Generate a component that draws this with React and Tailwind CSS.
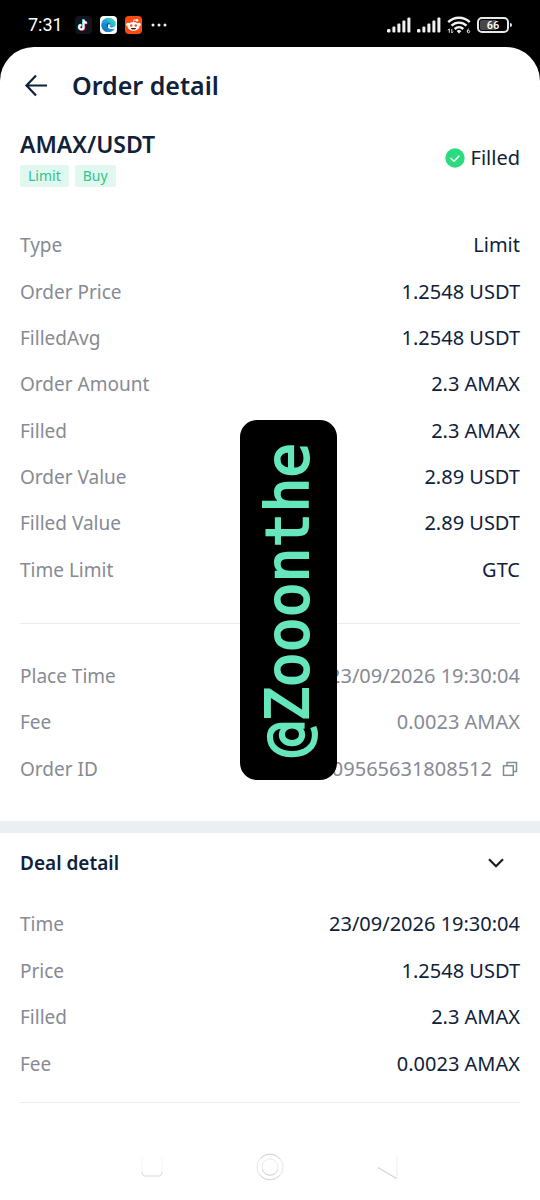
import React, { useState } from "react";
import { FaEdge } from "react-icons/fa";

const orderRows = [
  { label: "Type", value: "Limit" },
  { label: "Order Price", value: "1.2548 USDT" },
  { label: "FilledAvg", value: "1.2548 USDT" },
  { label: "Order Amount", value: "2.3 AMAX" },
  { label: "Filled", value: "2.3 AMAX" },
  { label: "Order Value", value: "2.89 USDT" },
  { label: "Filled Value", value: "2.89 USDT" },
  { label: "Time Limit", value: "GTC" },
];

const metaRows = [
  { label: "Place Time", value: "23/09/2026 19:30:04" },
  { label: "Fee", value: "0.0023 AMAX" },
  { label: "Order ID", value: "09565631808512", copy: true },
];

const dealRows = [
  { label: "Time", value: "23/09/2026 19:30:04" },
  { label: "Price", value: "1.2548 USDT" },
  { label: "Filled", value: "2.3 AMAX" },
  { label: "Fee", value: "0.0023 AMAX" },
];

const TikTokIcon = () => (
  <svg width="17" height="18" viewBox="0 0 17 18" aria-hidden="true">
    <rect width="17" height="18" rx="4" fill="#12141d" />
    <g fill="none" strokeWidth="1.9">
      <path
        d="M8.6 3.6v7.6a2.2 2.2 0 1 1-2.2-2.2M8.6 3.8c.3 1.8 1.4 2.8 3.2 2.9"
        stroke="#25f4ee"
        transform="translate(-.5 -.3)"
      />
      <path
        d="M8.6 3.6v7.6a2.2 2.2 0 1 1-2.2-2.2M8.6 3.8c.3 1.8 1.4 2.8 3.2 2.9"
        stroke="#fe2c55"
        transform="translate(.6 .5)"
      />
      <path
        d="M8.6 3.6v7.6a2.2 2.2 0 1 1-2.2-2.2M8.6 3.8c.3 1.8 1.4 2.8 3.2 2.9"
        stroke="#fff"
      />
    </g>
  </svg>
);

const EdgeIcon = () => (
  <svg width="17" height="18" viewBox="0 0 17 18" aria-hidden="true">
    <defs>
      <linearGradient id="edgeFill" x1="0" y1="1" x2="1" y2="0">
        <stop offset="0" stopColor="#1466b8" />
        <stop offset="0.45" stopColor="#1b93dc" />
        <stop offset="0.7" stopColor="#2bc3d2" />
        <stop offset="1" stopColor="#5fdc6a" />
      </linearGradient>
    </defs>
    <rect width="17" height="18" rx="4" fill="#fff" />
    <circle cx="8" cy="10" r="5.5" fill="#14529f" />
    <path d="M8 8.500h7v4.200c-2.500 1.200-6 .8-7-1.500z" fill="#fff" />
    <FaEdge x="1" y="1.500" size={15} fill="url(#edgeFill)" />
  </svg>
);

const RedditIcon = () => (
  <svg width="17" height="18" viewBox="0 0 17 18" aria-hidden="true">
    <rect width="17" height="18" rx="4" fill="#ff4b12" />
    <path d="M8.5 6.5 9 3.700l2.600.6" fill="none" stroke="#fff" strokeWidth="0.9" />
    <circle cx="12" cy="4.300" r="1.300" fill="#fff" />
    <circle cx="2.900" cy="8.500" r="1.700" fill="#fff" />
    <circle cx="14.100" cy="8.500" r="1.700" fill="#fff" />
    <ellipse cx="8.500" cy="10.300" rx="5.900" ry="4.400" fill="#fff" />
    <circle cx="6.200" cy="9.500" r="1.200" fill="#ff4b12" />
    <circle cx="10.800" cy="9.500" r="1.200" fill="#ff4b12" />
    <path d="M5.900 11.900h5.200c-.3 1.100-1.300 1.700-2.600 1.700s-2.300-.6-2.600-1.700z" fill="#222" />
  </svg>
);

const SignalIcon = () => (
  <svg width="24" height="16" viewBox="0 0 24 16" fill="#f2f2f2" aria-hidden="true">
    <rect x="0" y="12" width="3.400" height="3.500" rx="1.200" />
    <rect x="5.400" y="9.500" width="3" height="6" rx="1" />
    <rect x="10.400" y="6.500" width="3" height="9" rx="1" />
    <rect x="15.400" y="3.500" width="3" height="12" rx="1" />
    <rect x="20.400" y="0.500" width="3" height="15" rx="1" />
  </svg>
);

const WifiIcon = () => (
  <svg width="24" height="18" viewBox="0 0 24 18" aria-hidden="true">
    <g fill="none" stroke="#f2f2f2" strokeWidth="2.400">
      <path d="M1.200 6.200C7.200.3 16.800.3 22.800 6.200" />
      <path d="M4.500 9.700c4.200-4.100 10.800-4.100 15 0" />
      <path d="M7.700 13c2.500-2.300 6.100-2.300 8.600 0" />
    </g>
    <path d="M9.600 15c1.400-1.200 3.400-1.200 4.800 0L12 17.600z" fill="#f2f2f2" />
    <path d="M2.300 12.800v4M1 14.300l1.300-1.500M4.800 17v-4M6.100 15.500 4.800 17" fill="none" stroke="#ddd" />
    <path d="M21.800 12.700c-1.300.8-1.700 1.900-1.300 3.300" fill="none" stroke="#ddd" />
    <circle cx="21.500" cy="15.600" r="1.200" fill="none" stroke="#ddd" />
  </svg>
);

const Battery = () => (
  <div className="flex items-center gap-px">
    <div className="flex h-4 w-8 items-center justify-center rounded-[5px] border-2 border-[#e8e8e8] bg-black p-px">
      <div className="h-full w-full rounded-xs bg-linear-to-r from-[#484848] from-60% to-black to-60% text-center font-[Roboto] text-[11px] leading-[11px] font-medium text-white">
        66
      </div>
    </div>
    <div className="h-1 w-0.5 rounded-r bg-[#e8e8e8]" />
  </div>
);

const StatusBar = () => (
  <div className="flex h-[47px] items-center justify-between px-7 pt-[3px] text-white">
    <div className="flex items-center">
      <span className="mr-3 font-[Roboto] text-lg leading-6">7:31</span>
      <div className="flex items-center gap-2">
        <TikTokIcon />
        <EdgeIcon />
        <RedditIcon />
        <svg width="18" height="4" viewBox="0 0 18 4" fill="#f2f2f2" aria-hidden="true">
          <circle cx="3" cy="2" r="1.500" />
          <circle cx="9" cy="2" r="1.500" />
          <circle cx="15" cy="2" r="1.500" />
        </svg>
      </div>
    </div>
    <div className="flex items-center gap-1.5">
      <SignalIcon />
      <SignalIcon />
      <WifiIcon />
      <Battery />
    </div>
  </div>
);

const CopyIcon = () => (
  <svg width="16" height="16" viewBox="0 0 16 16" fill="none" stroke="#858b96" strokeWidth="1.500">
    <path d="M5 4.500V1.500h9.500v9h-3" />
    <rect x="1.500" y="4.800" width="9.800" height="9.500" />
  </svg>
);

const DetailRows = ({ rows, className, muted }) => (
  <dl className={`grid auto-rows-fr px-5 ${className}`}>
    {rows.map((row) => (
      <div key={row.label} className="flex items-center justify-between">
        <dt className="text-[19px] text-[#868a94]">{row.label}</dt>
        <dd
          className={
            muted
              ? "flex items-center gap-2 text-[#868a94]"
              : "flex items-center gap-2 text-[#10213a]"
          }
        >
          {row.value}
          {row.copy && (
            <button type="button" aria-label="Copy order ID" className="px-0.5">
              <CopyIcon />
            </button>
          )}
        </dd>
      </div>
    ))}
  </dl>
);

const Tag = ({ children }) => (
  <span className="rounded-[3px] bg-[#e1f8ee] px-2 text-sm leading-[22px] text-[#2fc491]">
    {children}
  </span>
);

const NavBar = () => (
  <nav className="flex h-[66px] items-center justify-center gap-[88px]">
    <button type="button" aria-label="Recent apps">
      <svg width="30" height="30" viewBox="0 0 30 30" fill="none">
        <path d="M5 5v16M25 5v16" stroke="#f3f3f3" />
        <path d="M5 20c0 3 1.500 4 3.500 4h13c2 0 3.500-1 3.500-4" stroke="#d6d6d6" />
      </svg>
    </button>
    <button type="button" aria-label="Home">
      <svg width="30" height="30" viewBox="0 0 30 30" fill="none">
        <circle cx="15" cy="15" r="13" stroke="#e6e6e6" />
        <circle cx="15" cy="15" r="8" stroke="#ececec" />
        <path d="M5 7a13 13 0 0 1 20 0M7.500 18a8 8 0 0 0 15 0M5 23a13 13 0 0 0 20 0" stroke="#d6d6d6" />
      </svg>
    </button>
    <button type="button" aria-label="Back">
      <svg width="30" height="30" viewBox="0 0 30 30" fill="none">
        <path d="M24 4v22" stroke="#ededed" />
        <path d="M5 15.500 23.500 26.500" stroke="#d2d2d2" strokeWidth="1.200" />
      </svg>
    </button>
  </nav>
);

const App = () => {
  const [open, setOpen] = useState(true);

  return (
    <div className="relative flex min-h-screen flex-col bg-black font-['Noto_Sans',sans-serif] text-xl leading-7 text-[#10213a]">
      <StatusBar />

      <main className="flex grow flex-col rounded-t-[34px] bg-white">
        <header className="flex h-[76px] items-center gap-6 px-6">
          <button type="button" aria-label="Back">
            <svg width="24" height="24" viewBox="0 0 24 24" fill="none" stroke="#10213a" strokeWidth="2.200">
              <path d="M12 2.500 2.500 12.500 12 22.500M2.500 12.500H23" />
            </svg>
          </button>
          <h1 className="text-[25px] font-semibold">Order detail</h1>
        </header>

        <section className="flex items-center justify-between px-5 pt-1.5 pb-[35px]">
          <div className="flex flex-col gap-1.5">
            <h2 className="text-[23px] leading-[30px] font-semibold">AMAX/USDT</h2>
            <div className="flex gap-1.5">
              <Tag>Limit</Tag>
              <Tag>Buy</Tag>
            </div>
          </div>
          <div className="flex items-center gap-1.5">
            <svg width="20" height="20" viewBox="0 0 20 20" aria-hidden="true">
              <circle cx="10" cy="10" r="9.700" fill="#2bdb7f" />
              <path d="m5.500 10 3.500 3.200 5.300-5.400" fill="none" stroke="#fff" strokeWidth="1.500" />
            </svg>
            <span>Filled</span>
          </div>
        </section>

        <DetailRows rows={orderRows} className="min-h-[371px]" />
        <hr className="mx-5 mt-[30px] mb-[29px] border-[#e9ecef]" />
        <DetailRows rows={metaRows} className="min-h-[139px]" muted />

        <div className="mt-[29px] h-3 bg-[#ebeff3]" />

        <section>
          <h2 className="text-[19px] font-semibold">
            <button
              type="button"
              aria-expanded={open}
              onClick={() => setOpen(!open)}
              className="flex h-[60px] w-full items-center justify-between pr-9 pl-5"
            >
              Deal detail
              <svg width="16" height="10" viewBox="0 0 16 10" fill="none" stroke="#1c1c1e" strokeWidth="2.200">
                <path d="m1 1.200 7 7 7-7" />
              </svg>
            </button>
          </h2>
          {open && (
            <div className="pt-2">
              <DetailRows rows={dealRows} className="min-h-[186px]" />
            </div>
          )}
          <hr className="mx-5 mt-[15px] border-[#e9ecef]" />
        </section>

        <div className="mt-auto">
          <NavBar />
        </div>
      </main>

      <div className="pointer-events-none absolute inset-0 flex items-center justify-center pl-9">
        <div className="flex h-[360px] w-[97px] rotate-180 items-center justify-center rounded-[17px] bg-black font-['DejaVu_Sans_Mono',monospace] text-[58px] leading-[93px] text-[#66e6bd] [-webkit-text-stroke:2px_#66e6bd] [writing-mode:vertical-rl]">
          @Zooonthe
        </div>
      </div>
    </div>
  );
};

export default App;
